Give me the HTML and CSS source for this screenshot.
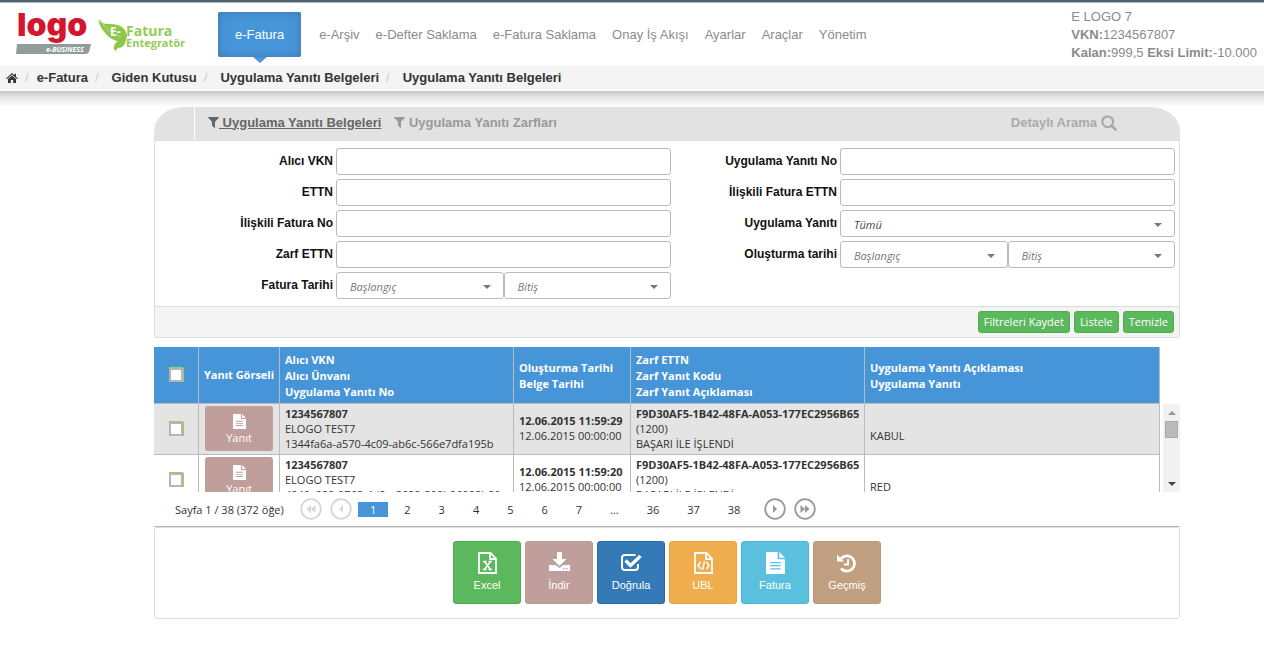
FILE: index.html
```html
<!DOCTYPE html>
<html lang="tr">
<head>
<meta charset="utf-8">
<title>Uygulama Yanıtı Belgeleri</title>
<link rel="stylesheet" href="styles.css">
</head>
<body>
<svg class="defs" width="0" height="0" aria-hidden="true">
  <symbol id="i-filter" viewBox="0 0 1408 1408"><path d="M1403 39q17 41-14 70l-493 493v742q0 42-39 59-13 5-25 5-27 0-45-19l-256-256q-19-19-19-45V602L19 109Q-12 80 5 39 22 0 64 0h1280q42 0 59 39z"/></symbol>
  <symbol id="i-file" viewBox="0 0 18 21"><path fill-rule="evenodd" d="M0 0h11v7h7v14H0zM12.500 0l5.500 5.500h-5.500zM4 9.500v1.200h10V9.500zM4 12.500v1.200h10v-1.200zM4 15.500v1.200h10v-1.200z"/></symbol>
  <symbol id="i-page" viewBox="0 0 19 22"><path fill="none" stroke="currentColor" stroke-width="1.800" d="M1 1h11.500L18 6.500V21H1zM12 1v6h6"/></symbol>
  <symbol id="i-prev" viewBox="0 0 22 22"><circle cx="11" cy="11" r="9.800" fill="none" stroke="currentColor" stroke-width="1.800"/><path d="M13 7v8l-4-4z"/></symbol>
  <symbol id="i-first" viewBox="0 0 22 22"><circle cx="11" cy="11" r="9.800" fill="none" stroke="currentColor" stroke-width="1.800"/><path d="M11 7v8l-4.500-4zM15.500 7v8L11 11z"/></symbol>
</svg>

<header class="top">
  <a class="brand" href="#" aria-label="Logo e-Business">
    <svg width="174" height="46" viewBox="0 0 174 46">
      <path d="M1 33h74l-2 8q-1 2-3 2H0z" fill="#919d9d"/>
      <text class="logo-word" x="1" y="25">logo</text>
      <text class="logo-sub" x="30" y="41">e-BUSINESS</text>
      <path d="M82 8q3 5 10 5 16-1 19 11 0 4-2 7-10 0-16-5Q84 18 82 8z" fill="#8cc84b"/>
      <path d="M98 38q-1-9 12-10-1 9-8 9l-3 3z" fill="#8cc84b"/>
      <path d="M84 9q8 13 21 17" fill="none" stroke="#b9df8f"/>
      <text class="ef-e" x="94" y="25">E-</text>
      <text class="ef-main" x="110" y="25">Fatura</text>
      <text class="ef-sub" x="110" y="36">Entegratör</text>
    </svg>
  </a>
  <nav class="menu">
    <a class="active" href="#">e-Fatura</a>
    <a href="#">e-Arşiv</a>
    <a href="#">e-Defter Saklama</a>
    <a href="#">e-Fatura Saklama</a>
    <a href="#">Onay İş Akışı</a>
    <a href="#">Ayarlar</a>
    <a href="#">Araçlar</a>
    <a href="#">Yönetim</a>
  </nav>
  <div class="account">
    <div>E LOGO 7</div>
    <div><b>VKN:</b>1234567807</div>
    <div><b>Kalan:</b>999,5 <b>Eksi Limit:</b>-10.000</div>
  </div>
</header>
<nav class="crumbs" aria-label="Konum">
  <a href="#" aria-label="Ana sayfa"><svg width="12" height="10" viewBox="0 0 12 10"><path d="M6 0l2.500 2.300V.700H10v3l2 1.900-.7.700L6 1.400.7 6.300 0 5.600zM6 2.400l4 3.600v4H7.200V7H4.800v3H2V6z"/></svg></a><i>/</i>
  <a href="#">e-Fatura</a><i>/</i>
  <a class="wide" href="#">Giden Kutusu</a><i>/</i>
  <a class="wide" href="#">Uygulama Yanıtı Belgeleri</a><i>/</i>
  <a class="wide" href="#">Uygulama Yanıtı Belgeleri</a>
</nav>
<div class="shade"></div>

<main class="content">
  <section class="filters">
    <div class="filter-head">
      <span class="handle"></span>
      <a class="tab current" href="#"><svg width="11" height="11"><use href="#i-filter"/></svg><span>&nbsp;Uygulama Yanıtı Belgeleri</span></a>
      <a class="tab" href="#"><svg width="11" height="11"><use href="#i-filter"/></svg><span>&nbsp;Uygulama Yanıtı Zarfları</span></a>
      <a class="tab detail" href="#">Detaylı Arama
        <svg width="16" height="16" viewBox="0 0 16 16"><circle cx="6.700" cy="6.700" r="5.400" fill="none" stroke="currentColor" stroke-width="2.200"/><path d="M10.500 10.500l4 4" stroke="currentColor" stroke-width="2.800" stroke-linecap="round"/></svg></a>
    </div>
    <form class="fields">
      <label for="vkn">Alıcı VKN</label><input id="vkn" type="text">
      <label for="yno">Uygulama Yanıtı No</label><input id="yno" type="text">
      <label for="ettn">ETTN</label><input id="ettn" type="text">
      <label for="iettn">İlişkili Fatura ETTN</label><input id="iettn" type="text">
      <label for="ifno">İlişkili Fatura No</label><input id="ifno" type="text">
      <label for="yanit">Uygulama Yanıtı</label>
      <div class="pick dark"><select id="yanit"><option>Tümü</option></select></div>
      <label for="zettn">Zarf ETTN</label><input id="zettn" type="text">
      <label for="ob">Oluşturma tarihi</label>
      <div class="pair"><div class="pick"><select id="ob"><option>Başlangıç</option></select></div><div class="pick"><select aria-label="Oluşturma tarihi bitiş"><option>Bitiş</option></select></div></div>
      <label for="fb">Fatura Tarihi</label>
      <div class="pair"><div class="pick"><select id="fb"><option>Başlangıç</option></select></div><div class="pick"><select aria-label="Fatura tarihi bitiş"><option>Bitiş</option></select></div></div>
    </form>
    <div class="filter-foot">
      <button type="button">Filtreleri Kaydet</button>
      <button type="button">Listele</button>
      <button type="button">Temizle</button>
    </div>
  </section>

  <section class="list">
    <div class="viewport">
      <table class="grid">
        <colgroup><col class="c1"><col class="c2"><col class="c3"><col class="c4"><col class="c5"><col class="c6"></colgroup>
        <thead>
          <tr>
            <th class="mid"><input type="checkbox" aria-label="Tümünü seç"></th>
            <th class="mid">Yanıt Görseli</th>
            <th>Alıcı VKN<br>Alıcı Ünvanı<br>Uygulama Yanıtı No</th>
            <th>Oluşturma Tarihi<br>Belge Tarihi</th>
            <th>Zarf ETTN<br>Zarf Yanıt Kodu<br>Zarf Yanıt Açıklaması</th>
            <th>Uygulama Yanıtı Açıklaması<br>Uygulama Yanıtı</th>
          </tr>
        </thead>
        <tbody>
          <tr class="odd">
            <td class="mid"><input type="checkbox" aria-label="Satır 1"></td>
            <td class="mid"><button class="view" type="button"><svg width="13" height="15"><use href="#i-file"/></svg>Yanıt</button></td>
            <td><b>1234567807</b><br>ELOGO TEST7<br>1344fa6a-a570-4c09-ab6c-566e7dfa195b</td>
            <td><b>12.06.2015 11:59:29</b><br>12.06.2015 00:00:00</td>
            <td><b>F9D30AF5-1B42-48FA-A053-177EC2956B65</b><br>(1200)<br>BAŞARI İLE İŞLENDİ</td>
            <td><br>KABUL</td>
          </tr>
          <tr>
            <td class="mid"><input type="checkbox" aria-label="Satır 2"></td>
            <td class="mid"><button class="view" type="button"><svg width="13" height="15"><use href="#i-file"/></svg>Yanıt</button></td>
            <td><b>1234567807</b><br>ELOGO TEST7<br>4940c288-0762-4d9a-8628-208b26082b20</td>
            <td><b>12.06.2015 11:59:20</b><br>12.06.2015 00:00:00</td>
            <td><b>F9D30AF5-1B42-48FA-A053-177EC2956B65</b><br>(1200)<br>BAŞARI İLE İŞLENDİ</td>
            <td><br>RED</td>
          </tr>
        </tbody>
      </table>
    </div>
    <div class="scroll" aria-hidden="true"><span class="up"></span><span class="thumb"></span><span class="down"></span></div>
  </section>

  <nav class="pager" aria-label="Sayfalar">
    <span class="summary">Sayfa 1 / 38 (372 öğe)</span>
    <button class="arrow off" type="button" aria-label="İlk"><svg width="22" height="22"><use href="#i-first"/></svg></button>
    <button class="arrow off" type="button" aria-label="Önceki"><svg width="22" height="22"><use href="#i-prev"/></svg></button>
    <div class="pages"><a class="on" href="#">1</a><a href="#">2</a><a href="#">3</a><a href="#">4</a><a href="#">5</a><a href="#">6</a><a href="#">7</a><span>…</span><a href="#">36</a><a href="#">37</a><a href="#">38</a></div>
    <button class="arrow flip" type="button" aria-label="Sonraki"><svg width="22" height="22"><use href="#i-prev"/></svg></button>
    <button class="arrow flip" type="button" aria-label="Son"><svg width="22" height="22"><use href="#i-first"/></svg></button>
  </nav>

  <section class="actions">
    <button class="excel" type="button"><svg width="19" height="22" viewBox="0 0 19 22"><use href="#i-page"/><path d="M5 9.500h3.500M10.500 9.500H14M5 17.500h3.500M10.500 17.500H14M6.500 9.500l6 8M12.500 9.500l-6 8" fill="none" stroke="currentColor" stroke-width="1.500"/></svg>Excel</button>
    <button class="get" type="button"><svg width="21" height="22" viewBox="0 0 21 22"><path fill-rule="evenodd" d="M8 0h5v7h4.500l-7 7-7-7H8zM0 13h6.500l4 3 4-3H21v6H0zM14 16v1.200h1.500V16zM17 16v1.200h1.500V16z"/></svg>İndir</button>
    <button class="check" type="button"><svg width="21" height="22" viewBox="0 0 21 22"><path fill="none" stroke="currentColor" stroke-width="2" d="M14.500 3H4Q1 3 1 6v9q0 3 3 3h10q3 0 3-3v-3"/><path fill="none" stroke="currentColor" stroke-width="3.200" d="M4.500 8.500l5 5L19.500 4"/></svg>Doğrula</button>
    <button class="ubl" type="button"><svg width="19" height="22" viewBox="0 0 19 22"><use href="#i-page"/><path d="M6.500 10L4 13.500 6.500 17M12.500 10l2.500 3.500-2.500 3.500M10.600 9l-2.200 9" fill="none" stroke="currentColor" stroke-width="1.500"/></svg>UBL</button>
    <button class="inv" type="button"><svg width="19" height="22"><use href="#i-file"/></svg>Fatura</button>
    <button class="hist" type="button"><svg width="20" height="22" viewBox="0 0 20 22"><path d="M0 2.500l7 7H0z"/><path fill="none" stroke="currentColor" stroke-width="2.700" d="M4 6.500A7.700 7.700 0 1 1 4 16.500"/><path fill="none" stroke="currentColor" stroke-width="1.800" d="M11 7v5.500H7"/></svg>Geçmiş</button>
  </section>
</main>
</body>
</html>
```

FILE: styles.css
```css
* { box-sizing: border-box; }
body { margin: 0; background: #fff; color: #333; font: 11px/15px "Open Sans", "Noto Sans", sans-serif; }
a { color: inherit; text-decoration: none; }
button, input, select { font: inherit; margin: 0; }
svg { fill: currentColor; flex: none; }
.defs { position: absolute; }

.top { display: flex; align-items: flex-start; height: 66px; border-top: 2px solid #4c6470; padding: 0 7px 0 16px; font: 13px/18px "Liberation Sans", Arial, sans-serif; color: #8b8b8b; box-shadow: inset 0 1px #b5b5b5; }
.brand { padding-top: 9px; }
.brand svg { display: block; }
.logo-word { font: 900 32px Inter, sans-serif; fill: #d5152e; }
.logo-sub { font: italic bold 7px "Open Sans", sans-serif; fill: #fff; }
.ef-e { font: bold 12px "Open Sans", sans-serif; fill: #fff; }
.ef-main { font: bold 14px "Open Sans", sans-serif; fill: #93cb55; }
.ef-sub { font: bold 11px "Open Sans", sans-serif; fill: #93cb55; }
.menu { display: flex; padding: 10px 0 0 28px; white-space: nowrap; }
.menu a { padding: 14px 8px 13px; }
.menu .active { position: relative; margin-right: 10px; padding: 14px 17px 13px; background: #4795d9; color: #fff; border-radius: 2px; box-shadow: inset 0 0 10px #3d78ac; }
.menu .active::after { content: ""; position: absolute; top: 100%; left: 50%; margin-left: -7px; border: 7px solid transparent; border-top: 6px solid #4795d9; border-bottom: 0; }
.account { margin-left: auto; padding-top: 6px; white-space: nowrap; }

.crumbs { display: flex; align-items: center; height: 23px; padding-left: 6px; background: #f4f4f4; color: #333; font: bold 13px/23px "Liberation Sans", Arial, sans-serif; }
.crumbs i { font-style: normal; font-weight: normal; color: #ccc; padding: 0 8px 0 7px; }
.crumbs .wide { padding-left: 5px; }
.crumbs svg { display: block; }
.shade { height: 16px; margin-top: 2px; background: linear-gradient(#c8c8c8, #e9e9e9 45%, #fff); }

.content { padding: 0 84px 0 154px; }
.filter-head { display: flex; align-items: center; height: 33px; padding-bottom: 2px; background: #e2e2e2; border-radius: 30px 30px 0 0 / 24px 24px 0 0; color: #999; font: bold 13px/18px "Liberation Sans", Arial, sans-serif; }
.handle { width: 41px; height: 33px; margin: 0 13px -2px 0; border-right: 1px solid #fff; }
.tab { display: flex; align-items: center; margin-right: 13px; }
.tab.current { color: #666; }
.tab.current span { text-decoration: underline; }
.tab.detail { gap: 4px; margin: 0 63px 0 auto; color: #aaa; }
.filters { margin-bottom: 9px; }
.fields { display: grid; grid-template-columns: 181fr 335fr 169fr 335fr; grid-auto-rows: 27px; row-gap: 4px; padding: 7px 4px 7px 0; border: 1px solid #ddd; }
.fields label { padding-right: 3px; text-align: right; font: bold 12px/26px "Liberation Sans", Arial, sans-serif; color: #111; }
.fields input { width: 100%; min-width: 0; border: 1px solid #bbb; border-radius: 3px; padding: 0 12px; }
.pair { display: flex; }
.pick { position: relative; flex: 1; }
.pick select { width: 100%; height: 27px; appearance: none; border: 1px solid #bbb; border-radius: 3px; background: #fff; padding: 2px 13px 0; font-style: italic; color: #777; }
.pick.dark select { color: #444; }
.pick::after { content: ""; position: absolute; right: 13px; top: 13px; border: 4px solid transparent; border-top-color: #777; border-bottom: 0; }
.filter-foot { display: flex; justify-content: flex-end; gap: 4px; padding: 4px 5px; background: #f4f4f4; border: 1px solid #ddd; border-top: 0; border-radius: 0 0 3px 3px; }
.filter-foot button { height: 22px; padding: 0 5px; border: 1px solid #4cae4c; border-radius: 3px; background: #5cb85c; color: #fff; line-height: 18px; }

.list { display: flex; gap: 3px; height: 145px; }
.viewport { flex: 1; overflow: hidden; }
.grid { width: 100%; border-collapse: separate; border-spacing: 0; table-layout: fixed; }
.c1 { width: 45px; } .c2 { width: 81px; } .c3 { width: 234px; } .c4 { width: 117px; } .c5 { width: 234px; }
.grid th, .grid td { padding: 0 5px; border: 1px solid #bbb; border-width: 0 1px 1px 0; text-align: left; white-space: nowrap; }
.grid th { height: 57px; padding-top: 1px; background: #4795d9; color: #fff; line-height: 16px; }
.grid td { height: 51px; padding-bottom: 2px; }
.grid .odd td { background: #e4e4e4; }
.grid .mid { padding: 0 0 1px; text-align: center; }
.grid input { appearance: none; display: block; width: 14px; height: 14px; margin: 0 auto; background: #fff; border: 2px solid #b5b5b5; box-shadow: 0 -1px #9ccb62, 1px 0 #9ccb62; }
.view { display: flex; flex-direction: column; align-items: center; gap: 1px; width: 68px; height: 45px; margin: 0 auto; padding: 8px 0 0; border: 0; border-radius: 3px; background: #c09e9c; color: #fff; line-height: 15px; }
.scroll { display: flex; flex-direction: column; align-items: center; width: 17px; margin-top: 57px; padding: 7px 0 6px; background: #f1f1f1; }
.up { border: 4px solid transparent; border-bottom-color: #999; border-top: 0; }
.thumb { width: 13px; height: 17px; margin-top: 6px; background: #bbb; border: 1px solid #a8a8a8; }
.down { margin-top: auto; border: 4px solid transparent; border-top-color: #444; border-bottom: 0; }

.pager { display: flex; align-items: center; height: 35px; padding-left: 21px; border-bottom: 1px solid #b5b5b5; }
.summary { width: 125px; }
.arrow { width: 22px; height: 22px; margin-right: 8px; padding: 0; border: 0; background: none; color: #999; }
.arrow svg { display: block; }
.arrow.off { color: #d6d6d6; }
.arrow.off + .pages { margin-left: -2px; }
.flip svg { transform: rotate(180deg); }
.pages { display: flex; gap: 4px; margin-right: 12px; }
.pages > * { padding: 0 12px; }
.pages .on { background: #4795d9; color: #fff; }

.actions { display: flex; justify-content: center; gap: 4px; padding: 13px 0 14px; border: 1px solid #ddd; border-radius: 3px; }
.actions button { display: flex; flex-direction: column; align-items: center; gap: 4px; width: 68px; height: 63px; padding: 10px 0 0; border: 1px solid; border-radius: 3px; color: #fff; font: 11px/15px "Liberation Sans", Arial, sans-serif; }
.actions .excel { background: #5cb85c; border-color: #4cae4c; }
.actions .get { background: #c09e9c; border-color: #b99795; }
.actions .check { background: #337ab7; border-color: #2e6da4; }
.actions .ubl { background: #f0ad4e; border-color: #eea236; }
.actions .inv { background: #5bc0de; border-color: #46b8da; }
.actions .hist { background: #c0a080; border-color: #b99877; }
```
